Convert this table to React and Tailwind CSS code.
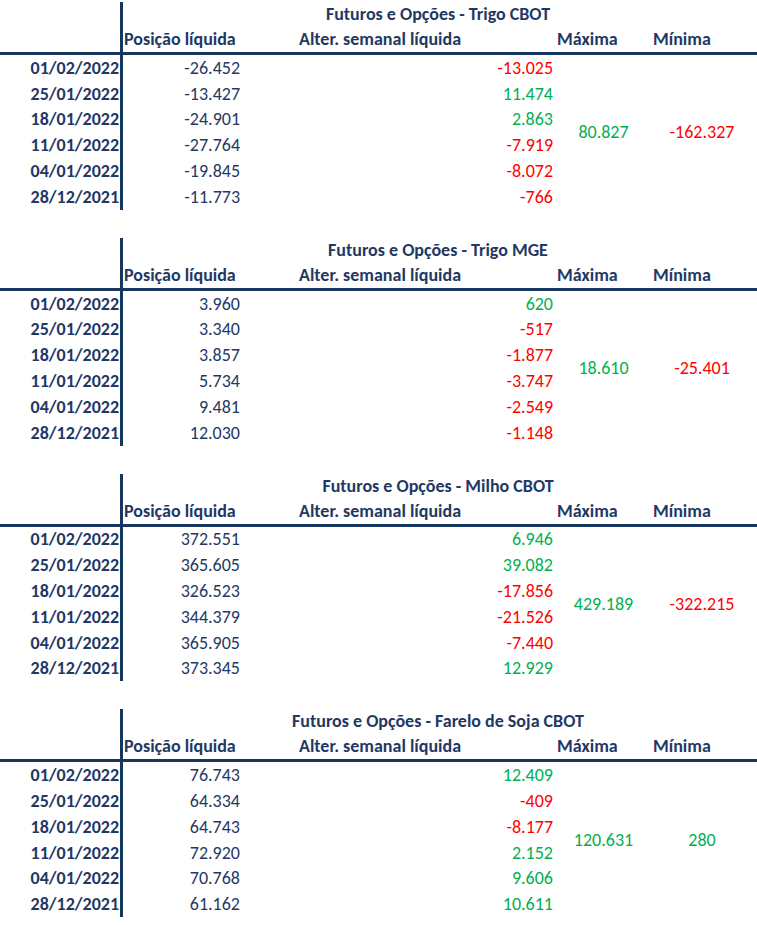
import React from "react";

const NAVY = "text-[#1f3864]";

const TABLES = [
  {
    title: "Futuros e Opções - Trigo CBOT",
    rows: [
      ["01/02/2022", "-26.452", "-13.025"],
      ["25/01/2022", "-13.427", "11.474"],
      ["18/01/2022", "-24.901", "2.863"],
      ["11/01/2022", "-27.764", "-7.919"],
      ["04/01/2022", "-19.845", "-8.072"],
      ["28/12/2021", "-11.773", "-766"],
    ],
    max: "80.827",
    min: "-162.327",
  },
  {
    title: "Futuros e Opções - Trigo MGE",
    rows: [
      ["01/02/2022", "3.960", "620"],
      ["25/01/2022", "3.340", "-517"],
      ["18/01/2022", "3.857", "-1.877"],
      ["11/01/2022", "5.734", "-3.747"],
      ["04/01/2022", "9.481", "-2.549"],
      ["28/12/2021", "12.030", "-1.148"],
    ],
    max: "18.610",
    min: "-25.401",
  },
  {
    title: "Futuros e Opções - Milho CBOT",
    rows: [
      ["01/02/2022", "372.551", "6.946"],
      ["25/01/2022", "365.605", "39.082"],
      ["18/01/2022", "326.523", "-17.856"],
      ["11/01/2022", "344.379", "-21.526"],
      ["04/01/2022", "365.905", "-7.440"],
      ["28/12/2021", "373.345", "12.929"],
    ],
    max: "429.189",
    min: "-322.215",
  },
  {
    title: "Futuros e Opções - Farelo de Soja CBOT",
    rows: [
      ["01/02/2022", "76.743", "12.409"],
      ["25/01/2022", "64.334", "-409"],
      ["18/01/2022", "64.743", "-8.177"],
      ["11/01/2022", "72.920", "2.152"],
      ["04/01/2022", "70.768", "9.606"],
      ["28/12/2021", "61.162", "10.611"],
    ],
    max: "120.631",
    min: "280",
  },
];

const sign = (v) => (v.startsWith("-") ? "text-[#ff0000]" : "text-[#00b050]");

function Block({ table }) {
  return (
    <div className="flex flex-col">
      {/* title + column headers */}
      <div className="flex">
        <div className="w-[120px] shrink-0" />
        <div className="w-[3px] shrink-0 bg-[#17375e]" />
        <div className="flex-1 flex flex-col">
          <div className={`h-[24px] flex items-center justify-center pr-[4px] font-bold ${NAVY}`}>
            {table.title}
          </div>
          <div className={`h-[26px] flex items-center font-bold whitespace-nowrap ${NAVY}`}>
            <div className="w-[119px] shrink-0 pl-[1px]">Posição líquida</div>
            <div className="w-[313px] shrink-0 pl-[57px]">Alter. semanal líquida</div>
            <div className="w-[97px] shrink-0 pl-[2px]">Máxima</div>
            <div className="w-[100px] shrink-0 pl-[1px]">Mínima</div>
          </div>
        </div>
      </div>

      <div className="h-[3px] bg-[#17375e]" />

      {/* data rows */}
      <div className="flex">
        <div className="w-[120px] shrink-0 flex flex-col">
          {table.rows.map((r) => (
            <div key={r[0]} className={`h-[25.8px] flex items-center justify-end pr-[1px] font-bold ${NAVY}`}>
              {r[0]}
            </div>
          ))}
        </div>
        <div className="w-[3px] shrink-0 bg-[#17375e]" />
        <div className="w-[119px] shrink-0 flex flex-col">
          {table.rows.map((r) => (
            <div key={r[0]} className={`h-[25.8px] flex items-center justify-end pr-[2px] ${NAVY}`}>
              {r[1]}
            </div>
          ))}
        </div>
        <div className="w-[313px] shrink-0 flex flex-col">
          {table.rows.map((r) => (
            <div key={r[0]} className={`h-[25.8px] flex items-center justify-end pr-[2px] ${sign(r[2])}`}>
              {r[2]}
            </div>
          ))}
        </div>
        <div className={`w-[97px] shrink-0 flex items-center justify-center ${sign(table.max)}`}>
          {table.max}
        </div>
        <div className={`w-[100px] shrink-0 flex items-center justify-center ${sign(table.min)}`}>
          {table.min}
        </div>
      </div>
    </div>
  );
}

export default function App() {
  return (
    <div
      className="w-[757px] min-h-[925px] bg-white pt-[2px] flex flex-col gap-[28px] text-[18px] leading-none"
      style={{ fontFamily: "Carlito, Lato, 'Liberation Sans', sans-serif" }}
    >
      {TABLES.map((t) => (
        <Block key={t.title} table={t} />
      ))}
    </div>
  );
}
